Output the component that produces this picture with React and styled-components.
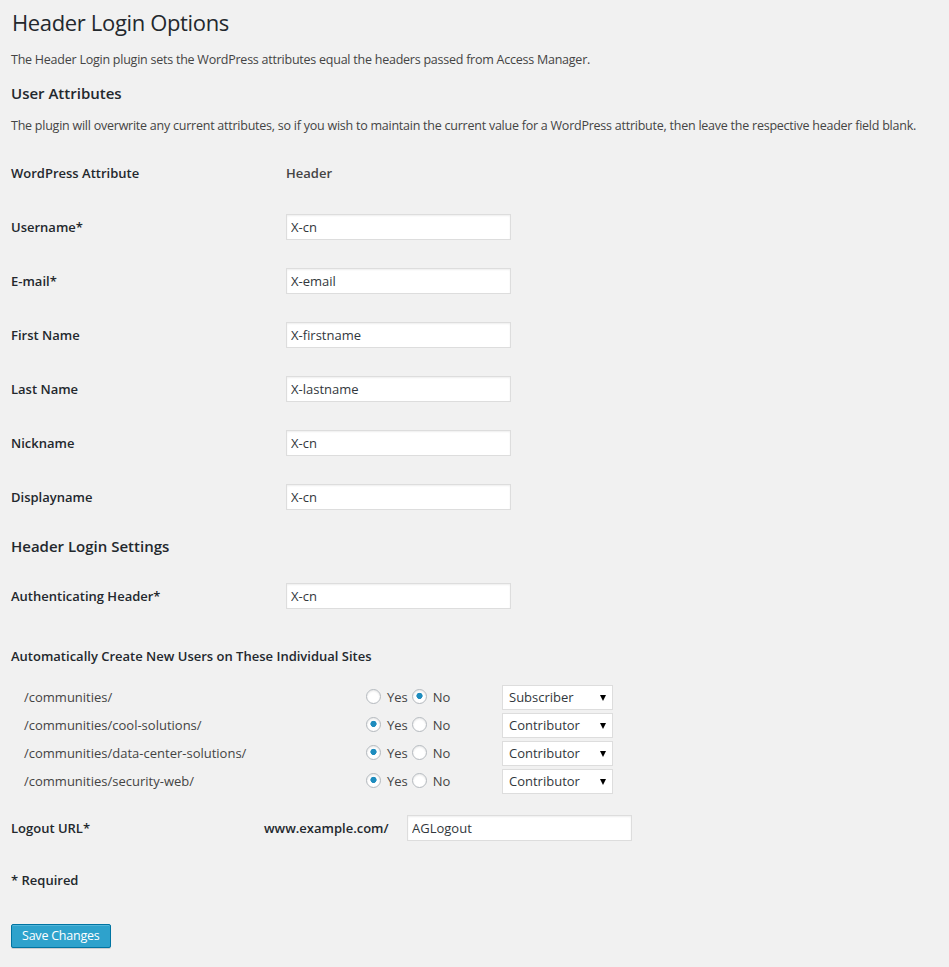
import React from "react";
import styled, { createGlobalStyle } from "styled-components";

const GlobalStyle = createGlobalStyle`
  body {
    margin: 0;
    background: #f1f1f1;
    color: #444;
    font-family: "Open Sans", "Liberation Sans", sans-serif;
    font-size: 13px;
    line-height: 1.5;
  }
`;

const Wrap = styled.div`
  padding: 0 11px 20px;
`;

const Title = styled.h1`
  margin: 8px 0 0;
  padding-left: 1px;
  font-size: 22px;
  font-weight: 400;
  line-height: 29px;
  letter-spacing: -0.35px;
  color: #23282d;
`;

const Description = styled.p`
  margin: 13px 0 0;
  font-size: 12.5px;
  line-height: 19.5px;
  letter-spacing: -0.24px;
  white-space: nowrap;
`;

const SectionTitle = styled.h2`
  margin: ${props => props.top || 13}px 0 0;
  font-size: 15px;
  font-weight: 600;
  line-height: 20px;
  color: #23282d;
`;

const FieldTable = styled.div`
  margin-top: ${props => props.top || 0}px;
`;

const FieldRow = styled.div`
  display: grid;
  grid-template-columns: 275px 225px;
  align-items: center;
  height: 54px;
`;

const FieldLabel = styled.span`
  font-weight: 600;
  color: ${props => props.muted ? "#444" : "#23282d"};
`;

const TextInput = styled.input`
  box-sizing: border-box;
  width: 225px;
  height: 26px;
  margin: 0 0 2px;
  padding: 0 4px;
  border: 1px solid #ddd;
  box-shadow: inset 0 1px 2px rgba(0, 0, 0, 0.07);
  background: #fff;
  color: #32373c;
  font-family: "Open Sans", "Liberation Sans", sans-serif;
  font-size: 13px;
  outline: none;
`;

const GroupLabel = styled.div`
  margin-top: 23px;
  font-weight: 600;
  color: #23282d;
  line-height: 19.5px;
`;

const SiteList = styled.div`
  margin-top: 17px;
  padding-left: 13px;
`;

const SiteRow = styled.div`
  display: grid;
  grid-template-columns: 342px 136px 111px;
  align-items: center;
  height: 28px;
`;

const SitePath = styled.span`
  color: #444;
`;

const RadioGroup = styled.div`
  display: flex;
  align-items: center;
`;

const Radio = styled.input.attrs({ type: "radio" })`
  appearance: none;
  box-sizing: border-box;
  width: 15px;
  height: 15px;
  margin: 0 6px 2px 0;
  border: 1px solid #b4b9be;
  border-radius: 50%;
  box-shadow: inset 0 1px 2px rgba(0, 0, 0, 0.1);
  background: #fff;
  &:checked {
    background: radial-gradient(circle at 50% 45%, #1e8cbe 0 2.8px, #fff 3.4px);
  }
`;

const RadioText = styled.span`
  margin-right: 4px;
  color: #444;
`;

const SelectBox = styled.div`
  position: relative;
  width: 111px;
  height: 25px;
  margin-bottom: 1px;
`;

const Select = styled.select`
  appearance: none;
  box-sizing: border-box;
  width: 100%;
  height: 100%;
  margin: 0;
  padding: 0 16px 0 6px;
  border: 1px solid #ddd;
  border-radius: 0;
  background: #fff;
  color: #32373c;
  font-family: "Open Sans", "Liberation Sans", sans-serif;
  font-size: 13px;
  outline: none;
`;

const Caret = styled.span`
  position: absolute;
  right: 7px;
  top: 10px;
  width: 0;
  height: 0;
  border-left: 3.5px solid transparent;
  border-right: 3.5px solid transparent;
  border-top: 6px solid #000;
  pointer-events: none;
`;

const LogoutRow = styled.div`
  display: grid;
  grid-template-columns: 253px 143px 225px;
  align-items: center;
  height: 40px;
  margin-top: 13px;
`;

const Note = styled.div`
  margin-top: 22px;
  font-weight: 600;
  color: #23282d;
  line-height: 19.5px;
`;

const SaveButton = styled.button`
  margin-top: 34px;
  height: 24px;
  padding: 0 10px;
  border: 1px solid #0074a2;
  border-radius: 2px;
  background: #2ea2cc;
  box-shadow: inset 0 1px 0 rgba(120, 200, 230, 0.5), 0 1px 0 rgba(0, 0, 0, 0.15);
  color: #fff;
  font-family: "Open Sans", "Liberation Sans", sans-serif;
  font-size: 12.5px;
  letter-spacing: -0.22px;
  line-height: 22px;
  cursor: pointer;
`;

const attributes = [
  { label: "Username*", value: "X-cn" },
  { label: "E-mail*", value: "X-email" },
  { label: "First Name", value: "X-firstname" },
  { label: "Last Name", value: "X-lastname" },
  { label: "Nickname", value: "X-cn" },
  { label: "Displayname", value: "X-cn" },
];

const sites = [
  { path: "/communities/", create: false, role: "Subscriber" },
  { path: "/communities/cool-solutions/", create: true, role: "Contributor" },
  { path: "/communities/data-center-solutions/", create: true, role: "Contributor" },
  { path: "/communities/security-web/", create: true, role: "Contributor" },
];

const roles = ["Subscriber", "Contributor", "Author", "Editor", "Administrator"];

const SiteOption = ({ site, index }) => (
  <SiteRow>
    <SitePath>{site.path}</SitePath>
    <RadioGroup>
      <Radio name={`site-${index}`} defaultChecked={site.create} />
      <RadioText>Yes</RadioText>
      <Radio name={`site-${index}`} defaultChecked={!site.create} />
      <RadioText>No</RadioText>
    </RadioGroup>
    <SelectBox>
      <Select defaultValue={site.role}>
        {roles.map(role => (
          <option key={role}>{role}</option>
        ))}
      </Select>
      <Caret />
    </SelectBox>
  </SiteRow>
);

const App = () => {
  return (
    <Wrap>
      <GlobalStyle />
      <Title>Header Login Options</Title>
      <Description>
        The Header Login plugin sets the WordPress attributes equal the headers passed from Access Manager.
      </Description>

      <SectionTitle>User Attributes</SectionTitle>
      <Description>
        The plugin will overwrite any current attributes, so if you wish to maintain the current value for a WordPress attribute, then leave the respective header field blank.
      </Description>

      <FieldTable top={12}>
        <FieldRow>
          <FieldLabel>WordPress Attribute</FieldLabel>
          <FieldLabel muted>Header</FieldLabel>
        </FieldRow>
        {attributes.map(attr => (
          <FieldRow key={attr.label}>
            <FieldLabel>{attr.label}</FieldLabel>
            <TextInput defaultValue={attr.value} />
          </FieldRow>
        ))}
      </FieldTable>

      <SectionTitle top={11}>Header Login Settings</SectionTitle>
      <FieldTable top={14}>
        <FieldRow>
          <FieldLabel>Authenticating Header*</FieldLabel>
          <TextInput defaultValue="X-cn" />
        </FieldRow>
      </FieldTable>

      <GroupLabel>Automatically Create New Users on These Individual Sites</GroupLabel>
      <SiteList>
        {sites.map((site, i) => (
          <SiteOption key={site.path} site={site} index={i} />
        ))}
      </SiteList>

      <LogoutRow>
        <FieldLabel>Logout URL*</FieldLabel>
        <FieldLabel>www.example.com/</FieldLabel>
        <TextInput defaultValue="AGLogout" />
      </LogoutRow>

      <Note>* Required</Note>

      <SaveButton type="button">Save Changes</SaveButton>
    </Wrap>
  );
};

export default App;
